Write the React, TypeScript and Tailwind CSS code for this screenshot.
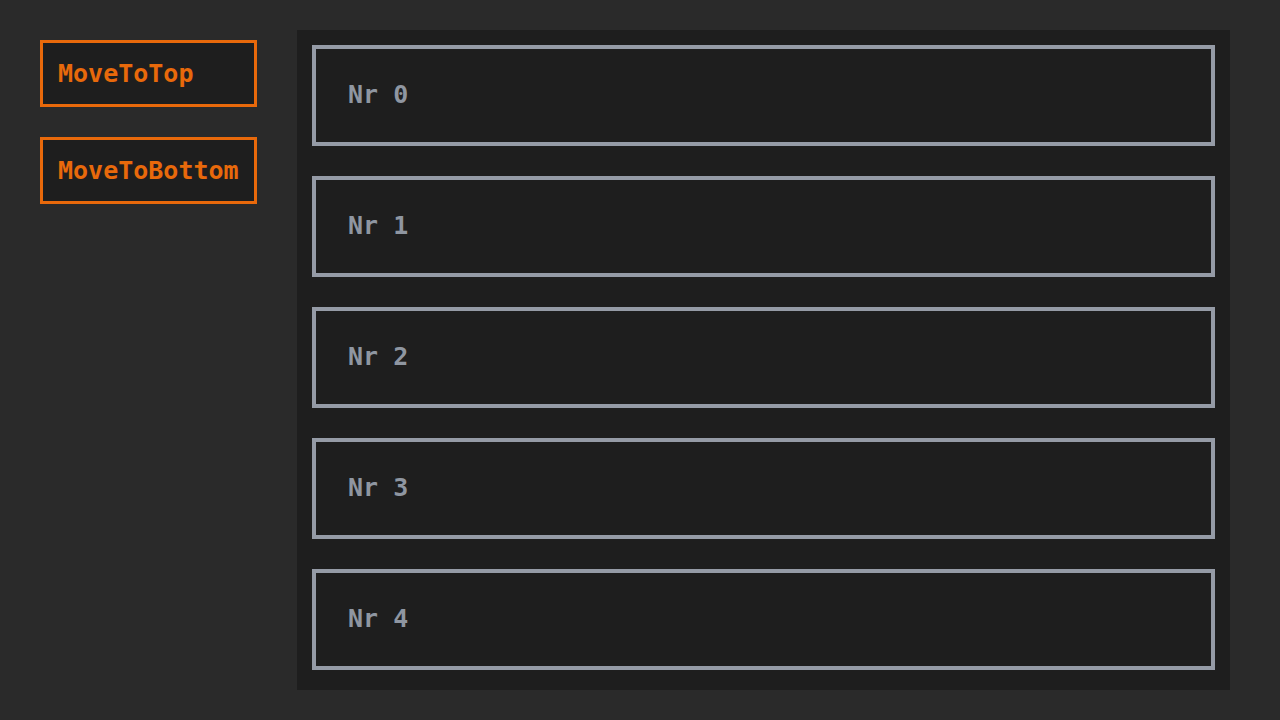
const items = [0, 1, 2, 3, 4];

function ActionButton({ label }: { label: string }) {
  return (
    <button className="w-[217px] h-[67px] border-[3px] border-[#e8690b] bg-[#1e1e1e] px-[15px] pb-[1px] text-left text-[25px] font-bold text-[#e8690b] leading-none">
      {label}
    </button>
  );
}

export default function App() {
  return (
    <div
      className="flex w-[1280px] h-[720px] bg-[#2a2a2a] overflow-hidden"
      style={{ fontFamily: '"DejaVu Sans Mono", "Liberation Mono", monospace' }}
    >
      {/* controls */}
      <div className="flex flex-col gap-[30px] pl-[40px] pt-[40px]">
        <ActionButton label="MoveToTop" />
        <ActionButton label="MoveToBottom" />
      </div>

      {/* list */}
      <div className="ml-[40px] mt-[30px] w-[933px] h-[660px] bg-[#1e1e1e] px-[15px] pt-[15px] flex flex-col gap-[30px]">
        {items.map((n) => (
          <div
            key={n}
            className="h-[101px] border-4 border-[#959ba6] flex items-center pl-[32px] pb-[1px] text-[25px] font-bold text-[#8f96a1]"
          >
            Nr {n}
          </div>
        ))}
      </div>
    </div>
  );
}
